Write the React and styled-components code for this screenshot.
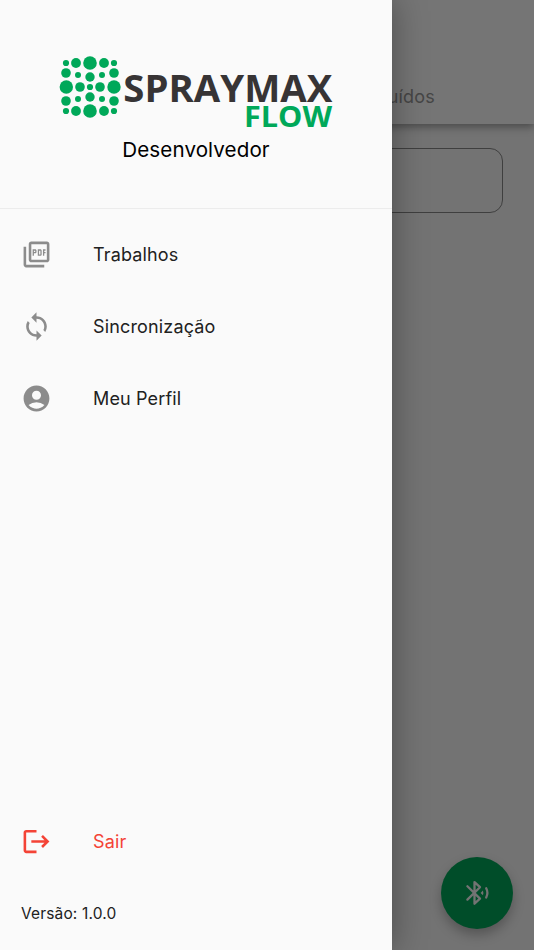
import React from 'react';
import styled, {createGlobalStyle} from 'styled-components';
import {MdOutlinePictureAsPdf, MdSync, MdAccountCircle, MdLogout} from 'react-icons/md';

const GREEN = '#00a859';

// [x, y, radius]
const dots = [
  [66, 63, 3.1], [76, 63, 4.9], [90, 63, 6.8], [104, 63, 4.9], [114, 63, 3.1],
  [66, 73, 4.8], [78, 75, 3], [90, 77, 4.7], [102, 75, 3], [114, 73, 4.8],
  [66.3, 87, 6.7], [80, 87, 4.8], [90, 87, 3.1], [100, 87, 4.8], [114, 87, 6.7],
  [66, 101, 4.8], [78, 99, 3], [90, 97, 4.7], [102, 99, 3], [114, 101, 4.8],
  [66, 111, 3.1], [76, 111, 4.9], [90, 111, 6.8], [104, 111, 4.9], [114, 111, 3.1],
];

const menu = [
  {label: 'Trabalhos', icon: MdOutlinePictureAsPdf},
  {label: 'Sincronização', icon: MdSync},
  {label: 'Meu Perfil', icon: MdAccountCircle},
];

const Logo = () => (
  <LogoSvg viewBox="56 52 280 80">
    {dots.map(([x, y, r]) => (
      <circle key={`${x}-${y}`} cx={x} cy={y} r={r} fill={GREEN} />
    ))}
    <text x="123.3" y="101.8" fontSize="38.2" fill="#373435" textLength="209" lengthAdjust="spacingAndGlyphs">SPRAYMAX</text>
    <text x="244" y="126.8" fontSize="28.6" fill={GREEN} textLength="88" lengthAdjust="spacingAndGlyphs">FLOW</text>
  </LogoSvg>
)

const BluetoothIcon = () => (
  <svg width="26" height="28" viewBox="464 879 26 28" fill="none" stroke="#737373" strokeWidth="2.3" strokeLinecap="round" strokeLinejoin="round">
    <path d="M467.4 886.2L480 898.6L474.5 903.7V882.1L480 887.2L467.4 899.6" />
    <path d="M486.2 888.3Q488.6 892.9 486.2 897.5" />
    <path d="M480.6 892.9L482.9 890.5Q483.8 892.9 482.9 895.3Z" fill="#737373" stroke="none" />
  </svg>
)

export default function App() {
  return (
    <Screen>
      <GlobalStyle />
      <AppBar>
        <Tab>Concluídos</Tab>
      </AppBar>
      <Content>
        <Card />
      </Content>
      <Scrim />
      <Fab aria-label="Bluetooth"><BluetoothIcon /></Fab>
      <Drawer>
        <Header>
          <Logo />
          <UserName>Desenvolvedor</UserName>
        </Header>
        <Menu>
          {menu.map(({label, icon: Icon}) => (
            <Item key={label}>
              <Icon size={31} />
              <Label>{label}</Label>
            </Item>
          ))}
        </Menu>
        <Item $danger>
          <MdLogout size={31} />
          <Label $danger>Sair</Label>
        </Item>
        <Version>Versão: 1.0.0</Version>
      </Drawer>
    </Screen>
  )
}

const GlobalStyle = createGlobalStyle`
  * {
    box-sizing: border-box;
  }
  body {
    margin: 0;
    font-family: Inter, 'Liberation Sans', sans-serif;
  }
`

const Screen = styled.div`
  position: relative;
  display: flex;
  flex-direction: column;
  height: 950px;
  overflow: hidden;
  background: #fafafa;
`

const AppBar = styled.header`
  display: flex;
  justify-content: flex-end;
  align-items: flex-end;
  height: 124px;
  padding: 0 99px 16px 0;
  background: #ffffff;
  box-shadow: 0 3px 8px rgba(0, 0, 0, 0.36);
`

const Tab = styled.span`
  font-size: 18px;
  line-height: 22px;
  letter-spacing: 0.2px;
  color: #999999;
`

const Content = styled.main`
  padding: 24px 31px;
`

const Card = styled.div`
  height: 65px;
  border: 1.5px solid #8a8a8a;
  border-radius: 13px;
`

const Scrim = styled.div`
  position: absolute;
  inset: 0;
  background: rgba(0, 0, 0, 0.54);
`

const Fab = styled.button`
  position: absolute;
  right: 21px;
  bottom: 21px;
  display: flex;
  align-items: center;
  justify-content: center;
  width: 72px;
  height: 72px;
  padding: 0;
  border: 0;
  border-radius: 50%;
  background: #004d29;
  box-shadow: 0 6px 12px rgba(0, 0, 0, 0.26);
`

const Drawer = styled.aside`
  position: absolute;
  top: 0;
  bottom: 0;
  left: 0;
  display: flex;
  flex-direction: column;
  width: 392px;
  background: #fafafa;
  box-shadow: 0 0 32px rgba(0, 0, 0, 0.36);
`

const Header = styled.div`
  display: flex;
  flex-direction: column;
  align-items: center;
  height: 209px;
  padding-top: 52px;
  border-bottom: 1px solid #ececec;
`

const LogoSvg = styled.svg`
  display: block;
  width: 280px;
  height: 80px;
  font-family: 'Open Sans', 'Noto Sans', sans-serif;
  font-weight: 700;
`

const UserName = styled.div`
  margin-top: 5px;
  font-size: 20.6px;
  line-height: 26px;
  letter-spacing: 0.1px;
  color: #000000;
`

const Menu = styled.nav`
  flex: 1;
  padding-top: 9px;
`

const Item = styled.div`
  display: flex;
  align-items: center;
  gap: 41px;
  height: 72.3px;
  padding-left: 21px;
  color: ${props => props.$danger ? '#f44336' : '#8c8c8c'};
`

const Label = styled.span`
  font-size: 18px;
  letter-spacing: 0.15px;
  color: ${props => props.$danger ? '#f44336' : '#212121'};
`

const Version = styled.div`
  height: 72px;
  padding: 26px 21px 0;
  font-size: 15.5px;
  line-height: 20px;
  letter-spacing: 0.15px;
  color: #212121;
`
